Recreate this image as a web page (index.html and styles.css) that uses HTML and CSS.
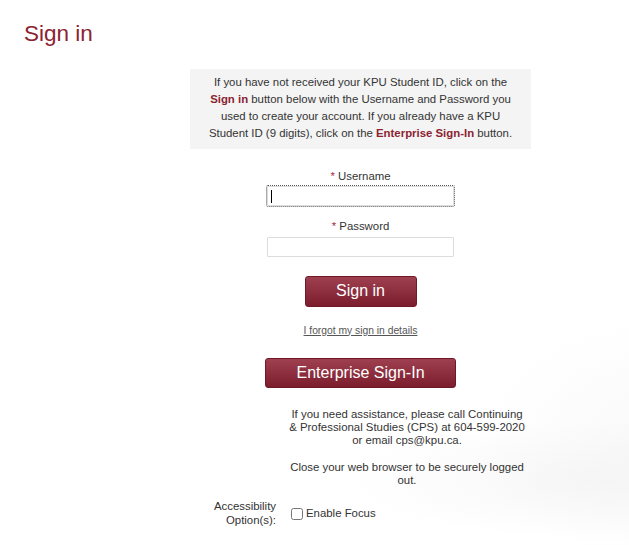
FILE: index.html
```html
<!DOCTYPE html>
<html>
<head>
    <link rel="stylesheet" href="styles.css">
</head>
<body>
    <h1 class="page-title">Sign in</h1>
    <form method="post" name="signin" class="panel">
        <div class="notice">
            If you have not received your KPU Student ID, click on the<br>
            <span class="hl">Sign in</span> button below with the Username and Password you<br>
            used to create your account. If you already have a KPU<br>
            Student ID (9 digits), click on the <span class="hl">Enterprise Sign-In</span> button.
        </div>

        <div class="field first">
            <label for="username" class="field-label"><span class="req">*</span> Username</label>
            <div class="input-wrap">
                <input type="text" id="username" name="username" class="text-input focused">
                <span class="caret"></span>
            </div>
        </div>
        <div class="field">
            <label for="password" class="field-label"><span class="req">*</span> Password</label>
            <div class="input-wrap">
                <input type="password" id="password" name="password" class="text-input">
            </div>
        </div>

        <button type="submit" class="btn btn-signin">Sign in</button>
        <a href="#" class="forgot">I forgot my sign in details</a>
        <button type="button" class="btn btn-enterprise">Enterprise Sign-In</button>

        <div class="info-row help">
            <div class="row-label"></div>
            <div class="row-content">
                If you need assistance, please call Continuing<br>
                &amp; Professional Studies (CPS) at 604-599-2020<br>
                or email cps@kpu.ca.<br>
                <br>
                Close your web browser to be securely logged<br>
                out.
            </div>
        </div>
        <div class="info-row access">
            <div class="row-label">Accessibility<br>Option(s):</div>
            <div class="row-content check">
                <input type="checkbox" id="focus" name="focus" class="check-box">
                <label for="focus">Enable Focus</label>
            </div>
        </div>
    </form>
</body>
</html>
```

FILE: styles.css
```css
html {
    height: 100%;
}
body {
    margin: 0;
    min-height: 545px;
    font-family: "Liberation Sans", Arial, sans-serif;
    font-size: 11.4px;
    color: #333;
    background-color: #fff;
    background-image:
        radial-gradient(ellipse 260px 60px at 610px 480px, rgba(242,242,242,0.7), rgba(255,255,255,0) 100%),
        radial-gradient(ellipse 180px 120px at 660px 440px, rgba(245,245,245,0.6), rgba(255,255,255,0) 100%);
    background-repeat: no-repeat;
}
.page-title {
    margin: 20px 0 0 24px;
    font-size: 22.5px;
    font-weight: normal;
    line-height: 28px;
    color: #8b2331;
}
.panel {
    width: 341px;
    margin: 21px 0 0 190px;
    display: flex;
    flex-direction: column;
    align-items: center;
}
.notice {
    align-self: stretch;
    background: #f4f4f4;
    padding: 5px 4px 7px;
    text-align: center;
    line-height: 17px;
}
.hl {
    color: #8b2331;
    font-weight: bold;
}
.field {
    display: flex;
    flex-direction: column;
    align-items: center;
    margin-top: 14px;
}
.field.first {
    margin-top: 21px;
}
.field-label {
    line-height: 13.3px;
}
.req {
    color: #a3303f;
}
.input-wrap {
    position: relative;
    margin-top: 3px;
}
.text-input {
    display: block;
    width: 187px;
    height: 20px;
    box-sizing: border-box;
    border: 1px solid #dcdcdc;
    border-radius: 1px;
    padding: 0 4px;
    margin: 0;
    background: #fff;
}
.text-input.focused {
    outline: 1px dotted #555;
}
.caret {
    position: absolute;
    left: 4px;
    top: 4px;
    width: 1px;
    height: 13px;
    background: #000;
}
.btn {
    border: 1px solid #6f1826;
    border-radius: 3px;
    background: linear-gradient(#9e4050, #7c1d2d);
    color: #fff;
    font-family: "Liberation Sans", Arial, sans-serif;
    font-size: 16px;
    padding: 0;
    cursor: pointer;
}
.btn-signin {
    width: 112px;
    height: 31px;
    margin-top: 19px;
}
.btn-enterprise {
    width: 191px;
    height: 30px;
    margin-top: 21px;
}
.forgot {
    margin-top: 18px;
    font-size: 10.3px;
    line-height: 12px;
    color: #555;
    text-decoration: underline;
}
.info-row {
    align-self: stretch;
    display: flex;
    line-height: 13.3px;
}
.info-row.help {
    margin-top: 20px;
}
.info-row.access {
    margin-top: 13px;
    align-items: center;
}
.row-label {
    width: 86px;
    text-align: right;
}
.row-content {
    width: 238px;
    margin-left: 12px;
    text-align: center;
}
.row-content.check {
    display: flex;
    align-items: center;
    text-align: left;
}
.check-box {
    width: 12px;
    height: 12px;
    margin: 0 3px 0 3px;
}
```
